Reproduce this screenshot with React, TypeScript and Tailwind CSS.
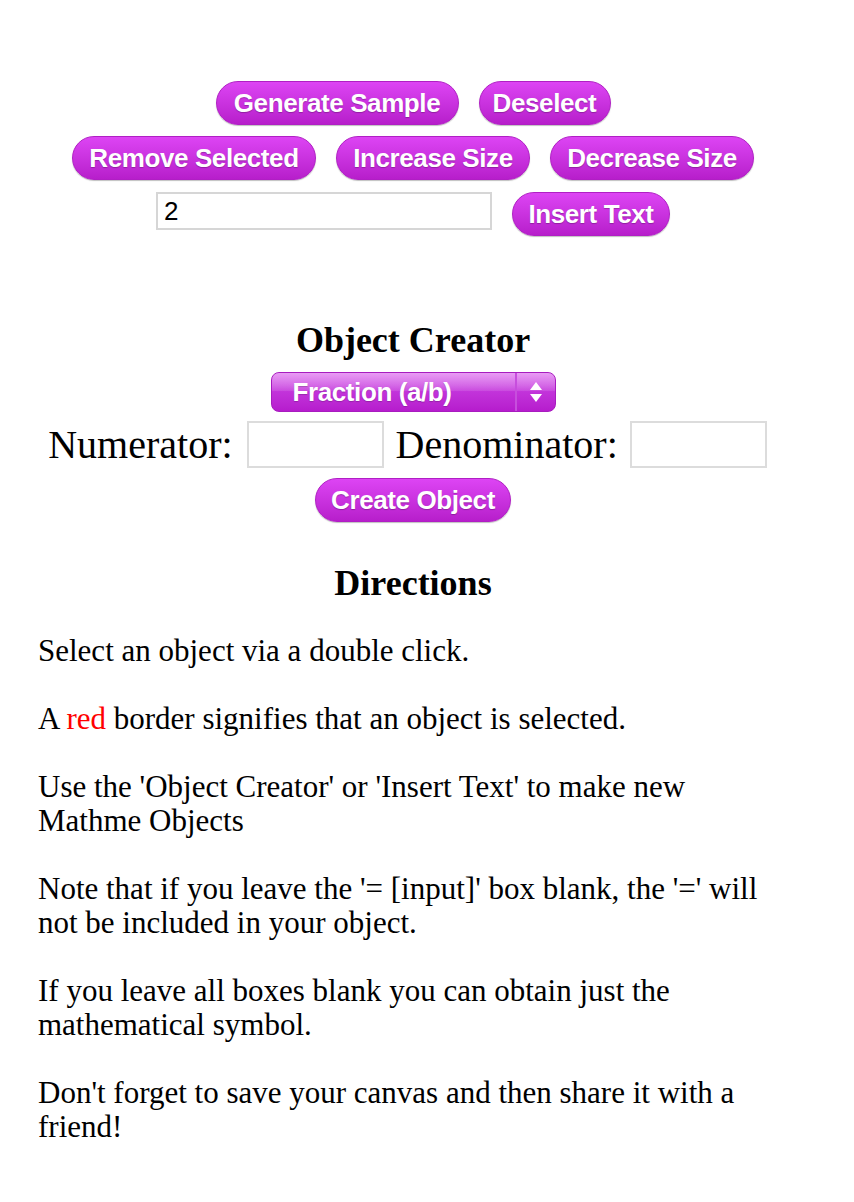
import React from "react";

const btn =
  "h-[44px] rounded-[22px] border border-[#b01fc4] bg-gradient-to-b from-[#dd44f4] to-[#b71ecb] px-0 text-white font-bold text-[26px] leading-none tracking-[-0.4px] shadow-[0_1px_1px_rgba(0,0,0,0.25)] [text-shadow:0_1px_1px_rgba(0,0,0,0.25)]";

export default function App() {
  return (
    <div className="w-[826px] bg-white pt-[81px] pb-[40px] text-black" style={{ fontFamily: '"Liberation Serif", serif' }}>
      <div style={{ fontFamily: '"Liberation Sans", Arial, sans-serif' }} className="flex flex-col items-center">
        <div className="flex gap-[20px]">
          <button className={`${btn} w-[243px]`}>Generate Sample</button>
          <button className={`${btn} w-[132px]`}>Deselect</button>
        </div>
        <div className="mt-[11px] flex gap-[20px]">
          <button className={`${btn} w-[244px]`}>Remove Selected</button>
          <button className={`${btn} w-[194px]`}>Increase Size</button>
          <button className={`${btn} w-[204px]`}>Decrease Size</button>
        </div>
        <div className="mt-[12px] flex items-start gap-[20px]">
          <input
            defaultValue="2"
            className="mt-[0px] h-[38px] w-[336px] border-2 border-[#d6d6d6] px-[6px] text-[26px] leading-none outline-none"
          />
          <button className={`${btn} w-[158px]`}>Insert Text</button>
        </div>
      </div>

      <h2 className="mt-[84px] text-center text-[36px] font-bold leading-[40px]">Object Creator</h2>

      <div className="mt-[12px] flex justify-center" style={{ fontFamily: '"Liberation Sans", Arial, sans-serif' }}>
        <div className="relative flex h-[40px] w-[285px] items-stretch overflow-hidden rounded-[8px] border border-[#a81cbf] bg-gradient-to-b from-[#dc66ee] via-[#c233da] to-[#b61ccd] text-white">
          <div className="absolute inset-x-0 top-0 h-[18px] bg-gradient-to-b from-[rgba(255,255,255,0.35)] to-[rgba(255,255,255,0.1)]" />
          <div className="relative flex flex-1 items-center pl-[21px] text-[26px] font-bold tracking-[-0.4px] [text-shadow:0_1px_1px_rgba(0,0,0,0.2)]">
            Fraction (a/b)
          </div>
          <div className="relative flex w-[40px] items-center justify-center border-l-2 border-[#c74edd]">
            <svg width="14" height="22" viewBox="0 0 14 22">
              <polygon points="7,1 13,9 1,9" fill="white" />
              <polygon points="7,21 13,13 1,13" fill="white" />
            </svg>
          </div>
        </div>
      </div>

      <div className="mt-[9px] flex items-center justify-center pr-[11px] text-[40px] leading-none">
        <span>Numerator:</span>
        <input className="ml-[14px] h-[47px] w-[137px] border-2 border-[#dcdcdc] outline-none" />
        <span className="ml-[12px]">Denominator:</span>
        <input className="ml-[12px] h-[47px] w-[137px] border-2 border-[#dcdcdc] outline-none" />
      </div>

      <div className="mt-[10px] flex justify-center" style={{ fontFamily: '"Liberation Sans", Arial, sans-serif' }}>
        <button className={`${btn} w-[196px]`}>Create Object</button>
      </div>

      <h2 className="mt-[41px] text-center text-[36px] font-bold leading-[40px]">Directions</h2>

      <div className="mt-[31px] w-[788px] pl-[38px] text-[31px] leading-[34px]">
        <p>Select an object via a double click.</p>
        <p className="mt-[34px]">
          A <span className="text-[#ff0000]">red</span> border signifies that an object is selected.
        </p>
        <p className="mt-[34px]">Use the 'Object Creator' or 'Insert Text' to make new Mathme Objects</p>
        <p className="mt-[34px]">
          Note that if you leave the '= [input]' box blank, the '=' will not be included in your object.
        </p>
        <p className="mt-[34px]">If you leave all boxes blank you can obtain just the mathematical symbol.</p>
        <p className="mt-[34px]">Don't forget to save your canvas and then share it with a friend!</p>
      </div>
    </div>
  );
}
